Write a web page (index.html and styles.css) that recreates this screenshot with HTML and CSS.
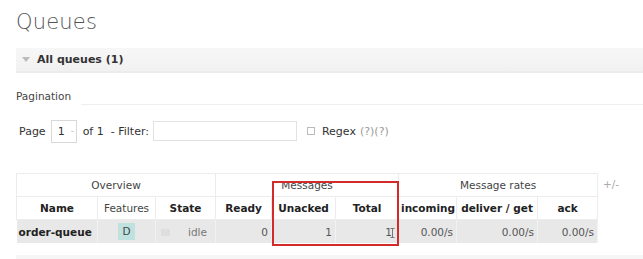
FILE: index.html
```html
<!DOCTYPE html>
<html>
<head>
<meta charset="utf-8">
<link rel="stylesheet" href="styles.css">
</head>
<body>
<div class="page">
  <h1 class="title">Queues</h1>
  <div class="section-bar"><span class="tri"></span><span class="section-title">All queues (1)</span></div>
  <div class="pagination-head"><span class="ph-label">Pagination</span><span class="ph-line"></span></div>
  <div class="filter-row">
    <span>Page</span>
    <span class="select"><span class="sel-val">1</span><span class="sel-arrow">-</span></span>
    <span>of 1 &nbsp;- Filter:</span>
    <span class="input"></span>
    <span class="checkbox"></span>
    <span class="regex">Regex</span>
    <span class="help">(?)(?)</span>
  </div>
  <div class="table-wrap">
    <table class="queues">
      <colgroup>
        <col class="c-name"><col class="c-feat"><col class="c-state"><col class="c-ready"><col class="c-unack"><col class="c-total"><col class="c-inc"><col class="c-deliv"><col class="c-ack">
      </colgroup>
      <thead>
        <tr class="group">
          <th colspan="3">Overview</th>
          <th colspan="3">Messages</th>
          <th colspan="3">Message rates</th>
        </tr>
        <tr class="cols">
          <th>Name</th>
          <th class="light">Features</th>
          <th>State</th>
          <th>Ready</th>
          <th>Unacked</th>
          <th>Total</th>
          <th>incoming</th>
          <th>deliver / get</th>
          <th>ack</th>
        </tr>
      </thead>
      <tbody>
        <tr>
          <td class="name">order-queue</td>
          <td class="center"><span class="badge">D</span></td>
          <td class="state"><span class="dot"></span><span class="idle">idle</span></td>
          <td class="num">0</td>
          <td class="num">1</td>
          <td class="num">1<svg class="cursor" width="5" height="10" viewBox="0 0 5 10"><path d="M0.5 0.5h4M2.5 0.5v9M0.5 9.5h4" stroke="#777" stroke-width="1" fill="none"/></svg></td>
          <td class="num">0.00/s</td>
          <td class="num">0.00/s</td>
          <td class="num">0.00/s</td>
        </tr>
      </tbody>
    </table>
    <span class="plusminus">+/-</span>
    <div class="highlight"></div>
  </div>
  <div class="next-bar"></div>
</div>
</body>
</html>
```
FILE: styles.css
```css
html, body { margin: 0; padding: 0; background: #fff; }
body { font-family: "DejaVu Sans", Verdana, sans-serif; font-size: 11px; color: #444; overflow: hidden; }
.page { padding: 0 0 0 16px; }
.title { margin: 0; padding-top: 8px; height: 40px; font-size: 21px; font-weight: 200; color: #555; line-height: 28px; letter-spacing: 0.2px; }
.section-bar { height: 23px; border-bottom: 2px solid #ececec; background: linear-gradient(#f7f7f7, #f1f1f1); display: flex; align-items: center; }
.tri { width: 0; height: 0; border-left: 4px solid transparent; border-right: 4px solid transparent; border-top: 5px solid #bbb; margin-left: 6px; margin-right: 7px; }
.section-title { font-weight: bold; color: #333; font-size: 11px; }
.pagination-head { display: flex; align-items: flex-end; height: 32px; }
.ph-label { font-size: 10.5px; color: #444; padding-bottom: 3px; }
.ph-line { flex: 1; border-bottom: 1px solid #eee; margin-left: 10px; }
.filter-row { display: flex; align-items: center; height: 24px; margin-top: 14px; padding-left: 3px; font-size: 11px; color: #333; }
.select { display: inline-flex; align-items: center; width: 24px; height: 21px; border: 1px solid #d8d8d8; margin: 0 6px 0 5px; padding-left: 0; box-sizing: content-box; }
.sel-val { margin-left: 6px; }
.sel-arrow { margin-left: 6px; color: #bbb; font-size: 9px; }
.input { width: 142px; height: 18px; border: 1px solid #e2e2e2; margin-left: 4px; }
.checkbox { width: 6px; height: 6px; border: 1px solid #bbb; margin-left: 10px; margin-right: 7px; }
.regex { color: #333; }
.help { color: #999; margin-left: 4px; }
.table-wrap { position: relative; margin-top: 30px; width: 627px; }
.queues { border-collapse: collapse; table-layout: fixed; width: 581px; font-size: 10.5px; }
.c-name { width: 81px; } .c-feat { width: 58px; } .c-state { width: 60px; } .c-ready { width: 56px; }
.c-unack { width: 64px; } .c-total { width: 63px; } .c-inc { width: 58px; } .c-deliv { width: 81px; } .c-ack { width: 60px; }
.queues th { height: 22px; padding: 0 2px; border: 1px solid #ececec; white-space: nowrap; }
.group th { font-weight: normal; color: #444; }
.cols th { color: #222; font-weight: bold; }
.cols th.light { font-weight: normal; color: #444; }
.queues td { height: 23px; padding: 0 3px; background: #e8e8e8; border-right: 1px solid #f2f2f2; white-space: nowrap; color: #555; }
.queues td.name { font-weight: bold; color: #222; padding-left: 2px; }
.queues td.num { text-align: right; }
.queues td.center { text-align: center; }
.badge { display: inline-block; background: #bfe2df; color: #444; padding: 0 4px; line-height: 17px; }
.state { color: #888; }
.dot { display: inline-block; width: 9px; height: 7px; background: #dedede; margin: 0 8px 0 2px; vertical-align: middle; }
.idle { margin-left: 10px; color: #777; }
.cursor { vertical-align: -2px; margin-left: -2px; }
.plusminus { position: absolute; left: 587px; top: 5px; color: #aaa; font-size: 10.5px; }
.highlight { position: absolute; left: 256px; top: 8px; width: 123px; height: 61px; border: 2px solid #d42a2a; }
.next-bar { margin-top: 12px; height: 10px; background: #f6f6f6; }
```
